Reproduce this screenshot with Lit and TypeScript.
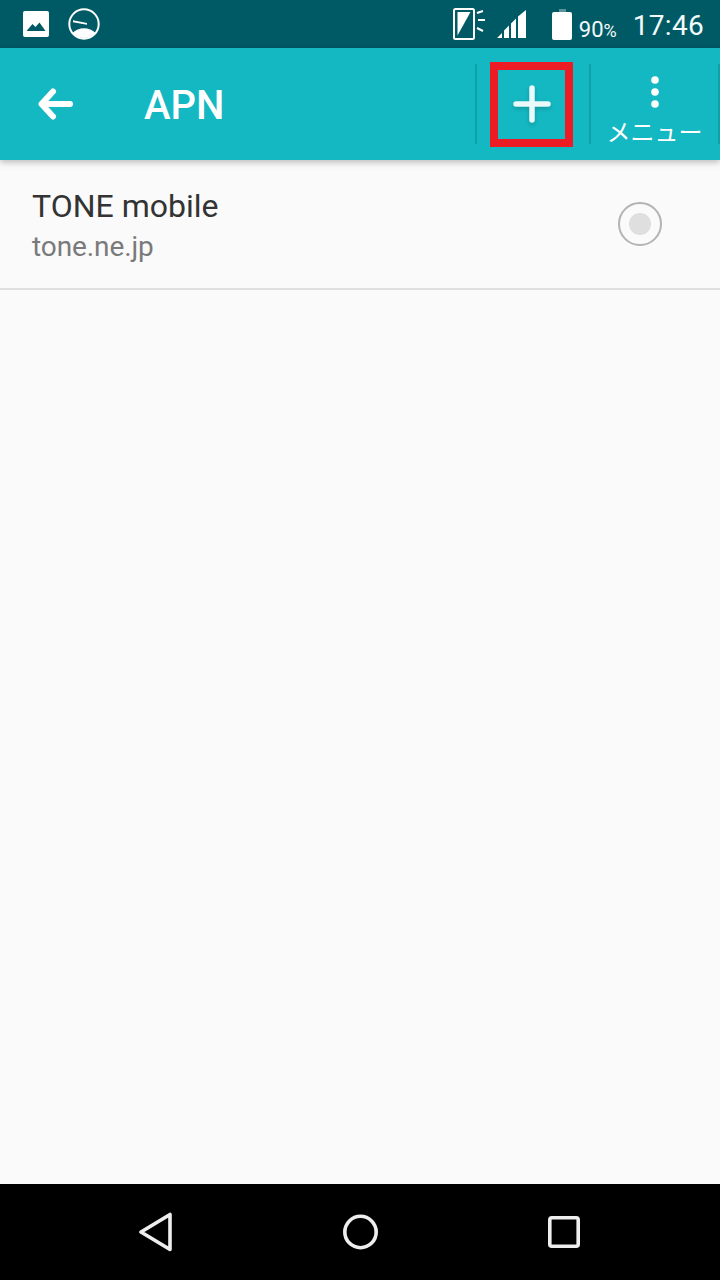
import { LitElement, html, css } from "lit";
import { customElement } from "lit/decorators.js";

@customElement("app-root")
export class AppRoot extends LitElement {
  static styles = css`
    :host { display: block; width: 720px; height: 1280px; font-family: Roboto, "Noto Sans CJK JP", sans-serif; }
    .page { width: 720px; height: 1280px; display: flex; flex-direction: column; background: #fafafa; overflow: hidden; }
    .status { height: 48px; flex: none; background: #005a66; display: flex; align-items: center; color: #fff; }
    .status svg { display: block; flex: none; }
    .img { margin-left: 23px; }
    .gauge { margin-left: 19px; }
    .nfc { margin-left: auto; }
    .sig { margin-left: 11px; }
    .bat { margin-left: 26px; }
    .pct { margin-left: 7px; font-size: 22px; line-height: 24px; width: 41px; padding-top: 12px; white-space: nowrap; color: #f4fafa; }
    .pct span { font-size: 18px; }
    .time { margin-left: 13px; margin-right: 16px; padding-top: 3px; font-size: 28px; line-height: 45px; letter-spacing: 0.3px; color: #f4fafa; white-space: nowrap; }
    .bar { height: 112px; flex: none; background: #14b8c2; display: flex; align-items: stretch; position: relative; box-shadow: 0 2px 7px rgba(0,0,0,.28); z-index: 1; color: #fff; }
    .back { margin: 40px 0 0 38px; width: 36px; height: 32px; flex: none; }
    .title { margin-left: 70px; font-size: 40px; font-weight: 500; line-height: 116px; flex: 1; }
    .action { flex: none; height: 80px; margin-top: 16px; border-left: 2px solid #0fa0aa; box-sizing: border-box; display: flex; flex-direction: column; align-items: center; }
    .add { width: 114px; justify-content: center; padding: 0 2px 0 0; }
    .add svg { filter: drop-shadow(0 2px 2px rgba(0,0,0,.18)); }
    .more { width: 129px; }
    .more svg { flex: none; margin: 11px 0 0 0; }
    .edge { flex: none; width: 2px; height: 80px; margin: 16px 0 0 0; background: #0fa0aa; }
    .label { flex: none; font-size: 24px; font-weight: 400; line-height: 30px; margin-top: 9px; white-space: nowrap; }
    .mark { position: absolute; left: 490px; top: 14px; width: 83px; height: 85px; box-sizing: border-box; border: 8px solid #ed1c24; }
    .list { flex: 1; }
    .row { height: 130px; box-sizing: border-box; border-bottom: 2px solid #dfdfdf; display: flex; align-items: flex-start; padding-left: 32px; }
    .text { flex: 1; padding-top: 26px; }
    .name { font-size: 32px; line-height: 40px; color: #333; }
    .sub { font-size: 28px; line-height: 40px; color: #7a7a7a; margin-top: 1px; letter-spacing: -0.1px; }
    .radio { width: 46px; height: 46px; margin: 41px 57px 0 0; flex: none; }
    .nav { height: 96px; flex: none; background: #000; display: flex; align-items: center; padding-left: 139px; }
    .nav svg { display: block; flex: none; }
    .nav .b { margin-right: 171px; }
    .nav .r { margin-left: 170px; }
  `;

  render() {
    return html`
      <div class="page">
        <div class="status">
          <svg class="img" width="26" height="26" viewBox="0 0 26 26">
            <rect width="26" height="26" rx="2" fill="#fff"/>
            <path d="M3.5 20 L9.5 13 L12.5 16 L16.5 11.5 L22.5 20 Z" fill="#005a66"/>
          </svg>
          <svg class="gauge" width="32" height="32" viewBox="0 0 32 32">
            <circle cx="16" cy="16" r="14.7" fill="none" stroke="#fff" stroke-width="2"/>
            <path d="M4.5 25 C10 18.5 22 18.5 27.5 25 C24.6 28.4 20.6 30 16 30 C11.4 30 7.4 28.4 4.5 25 Z" fill="#fff"/>
            <path d="M5 12.3 L19 15 L19 16.8 L5 14.3 Z" fill="#fff"/>
          </svg>
          <svg class="nfc" width="33" height="32" viewBox="0 0 33 32" fill="none" stroke="#fff">
            <rect x="1" y="1" width="20" height="30" rx="1.5" stroke-width="2"/>
            <path d="M4.5 27.5 L17.5 4 L4.5 4 Z" fill="#fff" stroke="none"/>
            <path d="M24 5 L30 3 M25 12 L32 12 M24 20 L30 23" stroke-width="2"/>
          </svg>
          <svg class="sig" width="29" height="28" viewBox="0 0 29 28">
            <path d="M0 28 L5 23 L5 28 Z M7 28 L7 20.5 L12 15.5 L12 28 Z M14 28 L14 13.5 L19 8.5 L19 28 Z M21 28 L21 6.5 L29 0 L29 28 Z" fill="#fff"/>
          </svg>
          <svg class="bat" width="20" height="31" viewBox="0 0 20 31">
            <rect x="7" y="0" width="7" height="3" fill="#5a929a"/>
            <rect x="0" y="3" width="20" height="28" rx="2" fill="#fff"/>
          </svg>
          <div class="pct">90<span>%</span></div>
          <div class="time">17:46</div>
        </div>
        <div class="bar">
          <svg class="back" viewBox="0 0 36 32" fill="none" stroke="#fff" stroke-width="6" stroke-linecap="round" stroke-linejoin="round">
            <path d="M32 16 L4 16 M15 3.5 L3.5 16 L15 28.5"/>
          </svg>
          <div class="title">APN</div>
          <div class="action add">
            <svg width="38" height="38" viewBox="0 0 38 38" fill="none" stroke="#eaf9fa" stroke-width="5.5" stroke-linecap="round">
              <path d="M19 3 L19 35 M3 19 L35 19"/>
            </svg>
          </div>
          <div class="action more">
            <svg width="10" height="34" viewBox="0 0 10 34"><circle cx="5" cy="5" r="3.8" fill="#fff"/><circle cx="5" cy="17" r="3.8" fill="#fff"/><circle cx="5" cy="29" r="3.8" fill="#fff"/></svg>
            <div class="label">メニュー</div>
          </div>
          <div class="edge"></div>
          <div class="mark"></div>
        </div>
        <div class="list">
          <div class="row">
            <div class="text">
              <div class="name">TONE mobile</div>
              <div class="sub">tone.ne.jp</div>
            </div>
            <svg class="radio" viewBox="0 0 46 46">
              <circle cx="23" cy="23" r="21" fill="none" stroke="#b3b3b3" stroke-width="2"/>
              <circle cx="23" cy="23" r="11" fill="#dfdfdf"/>
            </svg>
          </div>
        </div>
        <div class="nav">
          <svg class="b" width="33" height="40" viewBox="0 0 33 40" fill="none" stroke="#eee" stroke-width="3.6" stroke-linejoin="round">
            <path d="M31 2.5 L31 37.5 L2 20 Z"/>
          </svg>
          <svg width="35" height="36" viewBox="0 0 35 36" fill="none" stroke="#eee" stroke-width="3.6"><circle cx="17.5" cy="18" r="15.7"/></svg>
          <svg class="r" width="32" height="32" viewBox="0 0 32 32" fill="none" stroke="#eee" stroke-width="3.6"><rect x="1.8" y="1.8" width="28.4" height="28.4" rx="2"/></svg>
        </div>
      </div>
    `;
  }
}
